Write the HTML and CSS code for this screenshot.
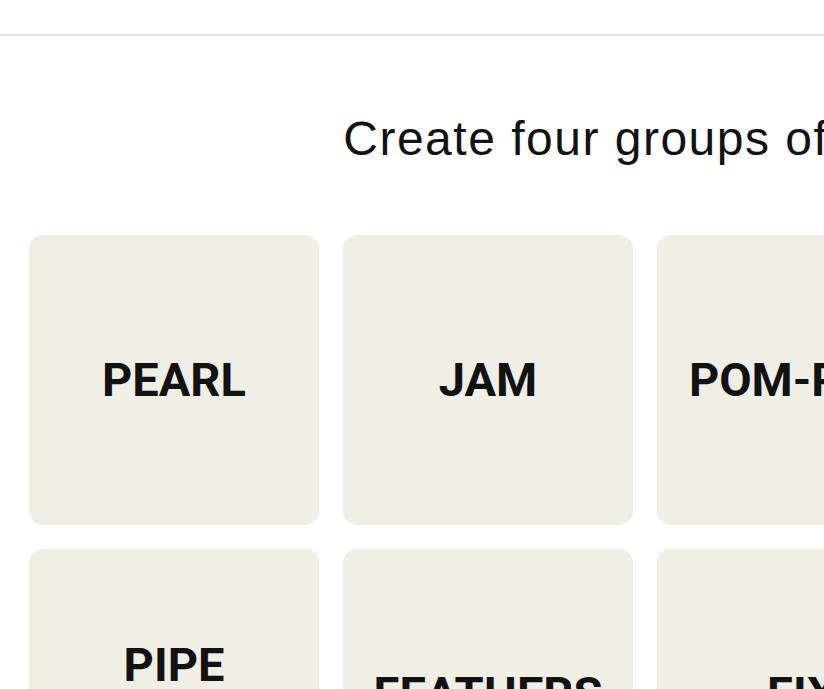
FILE: index.html
```html
<!DOCTYPE html>
<html lang="en">
<head>
<meta charset="utf-8">
<title>Connections</title>
<link rel="stylesheet" href="styles.css">
</head>
<body>
<div class="page">
  <header class="topbar"></header>
  <main class="game">
    <p class="prompt">Create four groups of four!</p>
    <div class="board">
      <button class="card">PEARL</button>
      <button class="card">JAM</button>
      <button class="card">POM-POM</button>
      <button class="card">SEQUIN</button>
      <button class="card">PIPE CLEANER</button>
      <button class="card">FEATHERS</button>
      <button class="card">FIX</button>
      <button class="card">GLITTER</button>
    </div>
  </main>
</div>
</body>
</html>
```
FILE: styles.css
```css
html, body {
  margin: 0;
  padding: 0;
  background: #ffffff;
  overflow: hidden;
}
.page {
  width: 1290px;
}
.topbar {
  height: 34px;
  border-bottom: 2px solid #e2e2e2;
  background: #ffffff;
}
.game {
  padding: 0 29px;
}
.prompt {
  margin: 0;
  padding-top: 73px;
  height: 199px;
  box-sizing: border-box;
  font-family: "Liberation Sans", Arial, sans-serif;
  font-size: 48px;
  letter-spacing: 1.5px;
  line-height: 60px;
  color: #121212;
  text-align: center;
}
.board {
  display: grid;
  grid-template-columns: repeat(4, 290px);
  grid-auto-rows: 290px;
  gap: 24px;
}
.card {
  border: none;
  margin: 0;
  padding: 0 20px;
  background: #efefe6;
  border-radius: 14px;
  font-family: Roboto, "Liberation Sans", sans-serif;
  font-weight: 700;
  font-size: 47px;
  line-height: 58px;
  color: #121212;
  text-transform: uppercase;
  display: flex;
  align-items: center;
  justify-content: center;
  text-align: center;
}
```
